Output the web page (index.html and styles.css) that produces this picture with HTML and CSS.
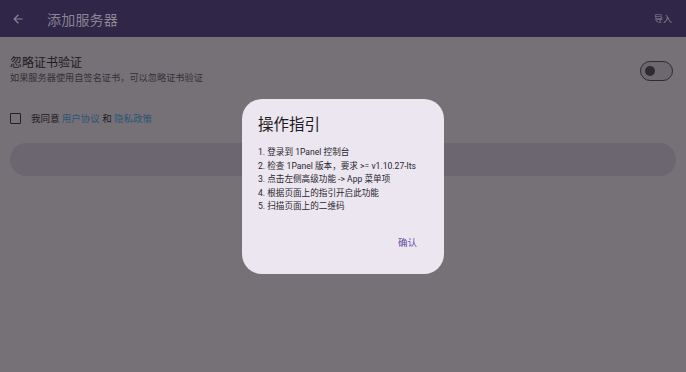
FILE: index.html
```html
<!DOCTYPE html>
<html lang="zh">
<head>
<meta charset="utf-8">
<link rel="stylesheet" href="styles.css">
</head>
<body>
<div class="page">
  <header class="topbar">
    <svg class="back" width="14" height="14" viewBox="0 0 24 24"><path d="M20 11H7.83l5.59-5.59L12 4l-8 8 8 8 1.41-1.41L7.83 13H20v-2z" fill="currentColor"/></svg>
    <span class="title">添加服务器</span>
    <span class="spacer"></span>
    <span class="action">导入</span>
  </header>
  <main class="content">
    <div class="row-setting">
      <div class="setting-text">
        <div class="setting-title">忽略证书验证</div>
        <div class="setting-sub">如果服务器使用自签名证书，可以忽略证书验证</div>
      </div>
      <div class="switch"><span class="thumb"></span></div>
    </div>
    <div class="agree">
      <span class="checkbox"></span>
      <span class="agree-text">我同意 <span class="link">用户协议</span> 和 <span class="link">隐私政策</span></span>
    </div>
    <div class="button"></div>
  </main>
  <div class="dialog">
    <div class="dialog-title">操作指引</div>
    <ol class="steps">
      <li>1. 登录到 1Panel 控制台</li>
      <li>2. 检查 1Panel 版本，要求 &gt;= v1.10.27-lts</li>
      <li>3. 点击左侧高级功能 -&gt; App 菜单项</li>
      <li>4. 根据页面上的指引开启此功能</li>
      <li>5. 扫描页面上的二维码</li>
    </ol>
    <div class="dialog-actions"><span class="confirm">确认</span></div>
  </div>
</div>
</body>
</html>
```
FILE: styles.css
```css
* { box-sizing: border-box; }
html, body { margin: 0; padding: 0; }
body {
  width: 686px;
  height: 372px;
  overflow: hidden;
  background: #767176;
  font-family: Roboto, "Noto Sans CJK SC", sans-serif;
}
.page { position: relative; width: 686px; height: 372px; }
.topbar {
  height: 37px;
  background: #2f2648;
  display: flex;
  align-items: center;
  padding: 0 14px 0 11px;
  color: #8a8494;
}
.back { color: #8a8494; margin-right: 22px; }
.title { font-size: 14px; letter-spacing: 0.2px; }
.spacer { flex: 1; }
.action { font-size: 9px; }
.content { padding: 19px 10px 0 10px; }
.row-setting { display: flex; align-items: center; }
.setting-text { flex: 1; }
.setting-title { font-size: 12px; color: #1c1a1f; line-height: 15px; }
.setting-sub { font-size: 9.2px; color: #333036; line-height: 14px; }
.switch {
  width: 33px;
  height: 20px;
  border: 1.5px solid #2e2b31;
  border-radius: 10px;
  background: #6d686f;
  display: flex;
  align-items: center;
  padding-left: 4px;
  margin-right: 3px;
}
.thumb { width: 10px; height: 10px; border-radius: 50%; background: #2e2b31; }
.agree { display: flex; align-items: center; margin-top: 26px; }
.checkbox {
  width: 11px; height: 11px;
  border: 1.5px solid #222024;
  border-radius: 1px;
  margin-right: 10px;
}
.agree-text { font-size: 9.5px; color: #1c1a1f; }
.link { color: #2a5578; }
.button {
  margin-top: 18px;
  height: 33px;
  border-radius: 17px;
  background: #6b6670;
}
.dialog {
  position: absolute;
  left: 242px;
  top: 99px;
  width: 202px;
  height: 175px;
  border-radius: 20px;
  background: #ece6f0;
  padding: 16px 16px 0 16px;
  display: flex;
  flex-direction: column;
}
.dialog-title { font-size: 15.5px; color: #1d1b20; line-height: 20px; }
.steps {
  list-style: none;
  margin: 11px 0 0 0;
  padding: 0;
  font-size: 8.6px;
  color: #2a272d;
  line-height: 13.6px;
}
.dialog-actions { display: flex; justify-content: flex-end; margin-top: 21px; padding-right: 11px; }
.confirm { font-size: 9.5px; color: #6750a4; }
```
